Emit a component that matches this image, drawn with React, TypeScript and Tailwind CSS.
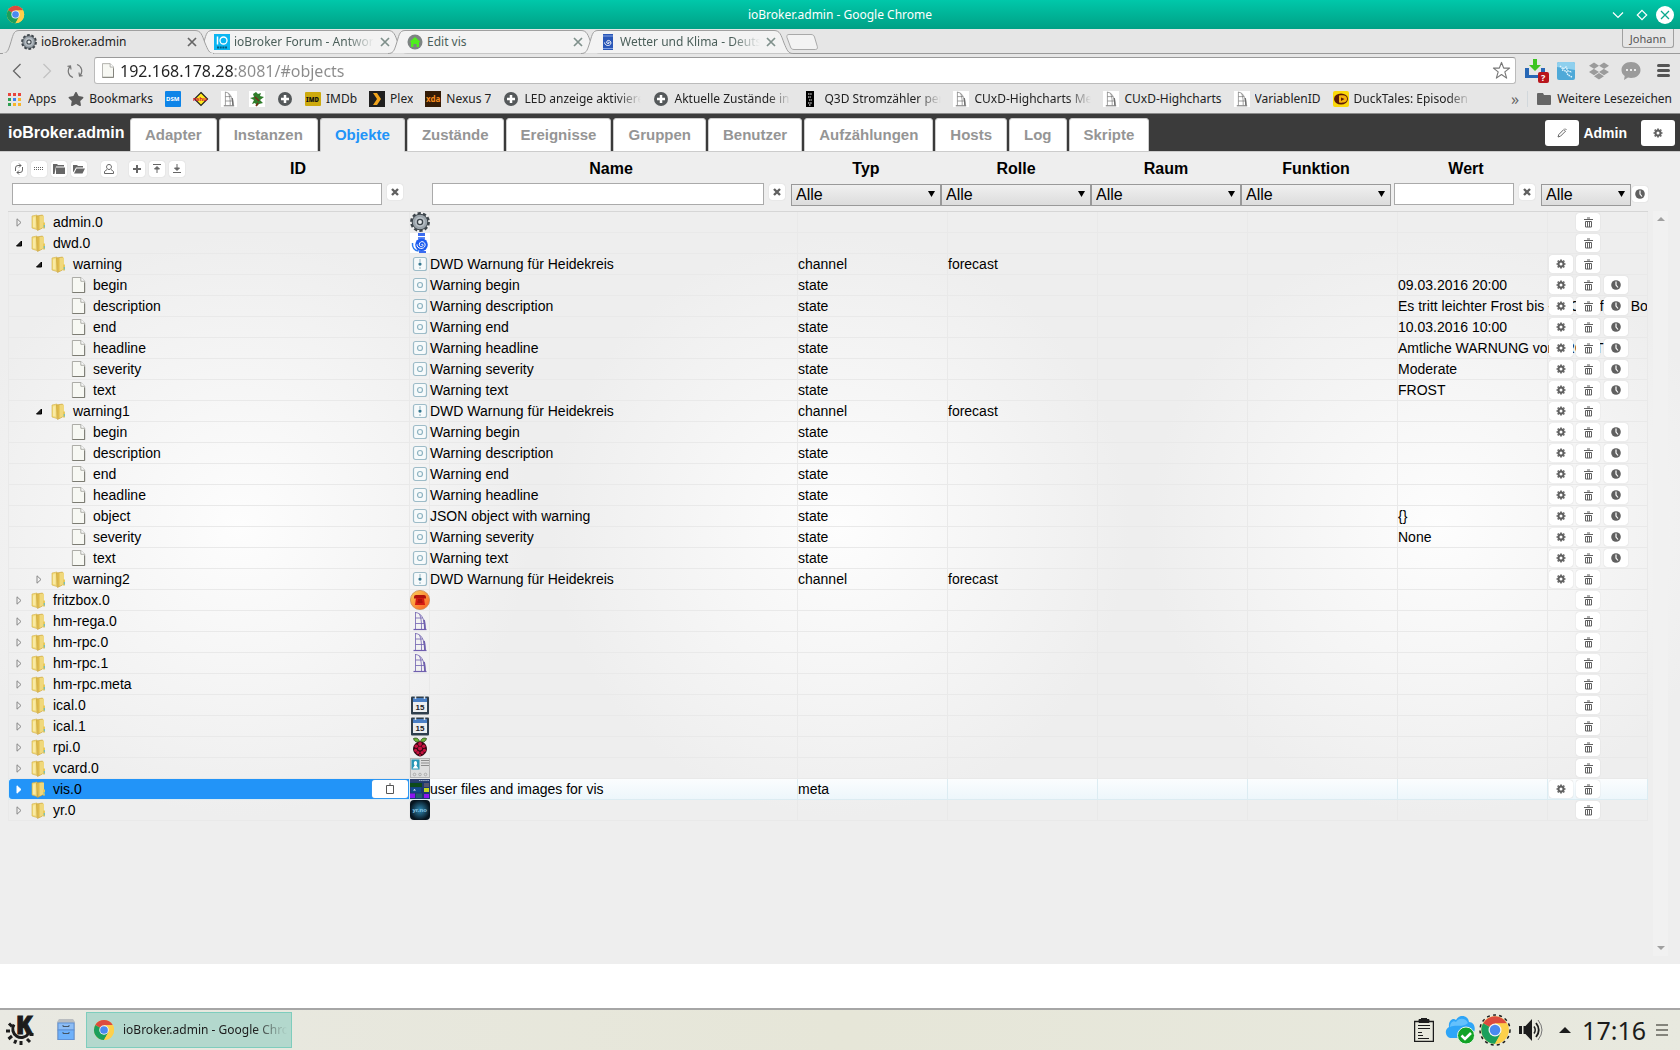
import type { ReactNode } from "react";
import clsx from "clsx";
import { FaDropbox, FaStar } from "react-icons/fa";

/* ---------- shared icons ---------- */

const ChromeIcon = ({ className }: { className?: string }) => (
  <svg viewBox="0 0 24 24" className={className} aria-hidden="true">
    <circle cx="12" cy="12" r="11" fill="#fdd04b" />
    <path d="M12 12 2.5 6.5A11 11 0 0 1 21.5 6.5L12 6.8Z" fill="#dc4b3e" />
    <path d="M2.5 6.5A11 11 0 0 0 12 23l4.6-8.2L12 12Z" fill="#1a9f5c" />
    <path d="M12 6.8h9.6A11 11 0 0 1 12 23l4.6-8.2Z" fill="#fdd04b" />
    <circle cx="12" cy="12" r="5.2" fill="#f4f4f4" />
    <circle cx="12" cy="12" r="4.2" fill="#4a89f0" />
  </svg>
);

const CogLogo = ({ className }: { className?: string }) => (
  <svg viewBox="0 0 20 20" className={className} aria-hidden="true">
    <circle cx="10" cy="10" r="8.4" fill="none" stroke="#3c444a" strokeWidth="3" strokeDasharray="3.2 2.08" />
    <circle cx="10" cy="10" r="7.8" fill="#9ba4ab" stroke="#3c444a" />
    <circle cx="10" cy="10" r="5" fill="#b9c0c6" />
    <circle cx="10" cy="10" r="2.6" fill="#e6eaec" stroke="#3c444a" strokeWidth="1.3" />
  </svg>
);

const DwdIcon = ({ className }: { className?: string }) => (
  <svg viewBox="0 0 20 20" className={className} aria-hidden="true">
    <rect width="20" height="20" fill="#fff" />
    <path d="M8 0h7v3H8zM9 18h7v2H9z" fill="#3b6cf0" />
    <path d="M8 4h7v2.500H8z" fill="#5c86f2" />
    <circle cx="11.500" cy="11.800" r="6.300" fill="#1d5cf0" />
    <path d="M2.500 10c-.5 4.500 2 7.500 6 8" fill="none" stroke="#2c7bf0" strokeWidth="1.500" />
    <path
      d="M11.500 12c0-1.100 1.700-.9 1.500.4s-2.800 1.700-3.500.1.600-3.900 2.400-3.900 3.600 1.600 3.200 3.800-2.400 3.300-4.600 3-3.700-2-3.500-4"
      fill="none"
      stroke="#fff"
    />
  </svg>
);

const PageIcon = ({ className }: { className?: string }) => (
  <svg viewBox="0 0 14 17" className={className} aria-hidden="true">
    <path d="M.5.5h9l4 4v12H.5z" fill="#f7f8f3" stroke="#a5a5a0" />
    <path d="M9.500.5v4h4" fill="#fff" stroke="#a5a5a0" />
    <path d="M.5 16.500h13V6" fill="none" stroke="#77776f" />
  </svg>
);

const FolderIcon = () => (
  <svg viewBox="0 0 15 17" className="h-[17px] w-[15px]" aria-hidden="true">
    <path d="M1 2 6 1v14.500L1 14z" fill="#f3dc7c" stroke="#d1ae45" strokeWidth=".6" />
    <path d="M2 3.500 4.500 3v10.500L2 13z" fill="#f9eaa4" />
    <path d="M5.500 2 11.500 1v13L6.500 16.500z" fill="#e0bb4a" stroke="#c9a23c" strokeWidth=".6" />
    <path d="M8.500 2 13 1.500V13l-4.500 2z" fill="#f0d87c" />
    <path d="M12 8.500h2v6h-2z" fill="#e8c95a" />
    <path d="M12.800 11h1v2.500h-1z" fill="#58bdd6" />
  </svg>
);

const GearGlyph = () => (
  <svg viewBox="0 0 10 10" className="size-[10px]" fill="none" stroke="#606060" aria-hidden="true">
    <circle cx="5" cy="5" r="2.500" strokeWidth="2" />
    <path d="M5 .5v1.500M5 8v1.500M.5 5H2M8 5h1.500M1.700 1.700l1 1M7.300 7.300l1 1M1.700 8.300l1-1M7.300 2.700l1-1" strokeWidth="1.700" />
  </svg>
);

const TrashGlyph = () => (
  <svg viewBox="0 0 9 11" className="h-[11px] w-[9px]" fill="none" stroke="#606060" aria-hidden="true">
    <path d="M0 2.500h9M3 1h3" strokeWidth="1.200" />
    <path d="M1.500 4.500h6v5.500h-6zM3.500 4.500V10M5.500 4.500V10" />
  </svg>
);

const ClockGlyph = () => (
  <svg viewBox="0 0 10 10" className="size-[10px]" aria-hidden="true">
    <circle cx="5" cy="5" r="4.800" fill="#606060" />
    <path d="M5 1.500V5l2 2.500" fill="none" stroke="#fff" strokeWidth="1.200" />
  </svg>
);

const CrossGlyph = () => (
  <svg viewBox="0 0 8 8" className="size-2" aria-hidden="true">
    <path d="m1 1 6 6M7 1 1 7" stroke="#606060" strokeWidth="2.400" />
  </svg>
);

/* ---------- browser chrome ---------- */

const TitleBar = () => (
  <div className="relative flex h-[29px] items-center justify-between bg-linear-to-b from-[#00c8aa] to-[#00a085] px-[6px]">
    <ChromeIcon className="size-[19px]" />
    <span className="absolute inset-x-0 text-center text-xs text-white">ioBroker.admin - Google Chrome</span>
    <div className="relative flex items-center gap-3">
      <button aria-label="Minimieren">
        <svg viewBox="0 0 12 12" className="size-3" fill="none" stroke="#fff" strokeWidth="1.200">
          <path d="m1 3.500 5 5 5-5" />
        </svg>
      </button>
      <button aria-label="Maximieren">
        <svg viewBox="0 0 12 12" className="size-3" fill="none" stroke="#fff" strokeWidth="1.200">
          <path d="m6 1.300 4.700 4.700L6 10.700 1.300 6z" />
        </svg>
      </button>
      <button aria-label="Schließen" className="-ml-1">
        <svg viewBox="0 0 18 18" className="size-[18px]">
          <circle cx="9" cy="9" r="9" fill="#fff" />
          <path d="m5 5 8 8m0-8-8 8" stroke="#0aa88d" strokeWidth="1.300" />
        </svg>
      </button>
    </div>
  </div>
);

type BrowserTab = { title: string; icon: ReactNode; active?: boolean };

const browserTabs: BrowserTab[] = [
  { title: "ioBroker.admin", icon: <CogLogo className="size-4" />, active: true },
  {
    title: "ioBroker Forum - Antwor",
    icon: (
      <svg viewBox="0 0 16 16" className="size-4">
        <rect width="16" height="16" fill="#0bb6f2" />
        <path d="M3.500 2.500v8" stroke="#fff" strokeWidth="1.500" />
        <circle cx="9.500" cy="6.500" r="3.500" fill="none" stroke="#fff" strokeWidth="1.300" />
        <path d="M3 13.500h10" stroke="#075a7a" strokeDasharray="2 .7" strokeWidth="2" />
      </svg>
    ),
  },
  {
    title: "Edit vis",
    icon: (
      <svg viewBox="0 0 16 16" className="size-4">
        <circle cx="8" cy="8" r="7.500" fill="#7d8383" />
        <path d="M2.500 8 8 3l5.500 5H12v5H9.500v-3h-3v3H4V8z" fill="#4fee1c" />
      </svg>
    ),
  },
  {
    title: "Wetter und Klima - Deuts",
    icon: (
      <svg viewBox="0 0 16 16" className="size-4">
        <rect x="3" width="10" height="16" fill="#2a57b8" />
        <path d="M3 2h10M3 14.500h10" stroke="#9db8ec" strokeWidth=".8" />
        <path d="M8.300 8.600c0-.8 1.100-.6 1 .2s-2 1.200-2.500.1S7.300 6.400 8.500 6.400s2.600 1.200 2.400 2.800-2 2.600-3.500 2.300S4.500 10 4.600 8.500" fill="none" stroke="#fff" />
      </svg>
    ),
  },
];

const TabStrip = () => (
  <div className="relative flex h-[25px] items-end justify-between bg-[#e6e6e6] pl-[2px]">
    <div className="absolute inset-x-0 bottom-0 h-px bg-[#9a9a9a]" />
    <div className="flex">
      {browserTabs.map((tab) => (
        <div
          key={tab.title}
          className={clsx("relative -mr-[19px] flex h-6 w-[212px] items-center pr-[17px] pl-[19px]", tab.active && "z-10")}
        >
          <svg viewBox="0 0 212 24" preserveAspectRatio="none" className="absolute inset-0 h-full w-full" aria-hidden="true">
            <path
              d="M0 23.500C5 23.500 6 21 8 15 11 6 11 .5 17 .5H193C199 .5 200 5 203 13 206 20 207 23.500 212 23.500"
              fill={tab.active ? "#e6e6e6" : "#f3f3f3"}
              stroke="#a0a0a0"
            />
            {tab.active && <path d="M1 23.500h210" stroke="#e6e6e6" strokeWidth="1.500" />}
          </svg>
          <span className="relative">{tab.icon}</span>
          <span
            className={clsx(
              "relative ml-1 flex-1 overflow-hidden text-xs whitespace-nowrap",
              tab.active ? "text-[#222]" : "text-[#4b5f5a]",
              tab.title.length > 20 && "mask-[linear-gradient(to_right,black_80%,transparent)]",
            )}
          >
            {tab.title}
          </span>
          <button aria-label={`${tab.title} schließen`} className="relative ml-[6px]">
            <svg viewBox="0 0 10 10" className="size-[10px]">
              <path d="m1 1 8 8m0-8-8 8" stroke={tab.active ? "#666" : "#7f908b"} strokeWidth="1.700" />
            </svg>
          </button>
        </div>
      ))}
      <button aria-label="Neuer Tab" className="relative ml-3 self-center">
        <svg viewBox="0 0 32 16" className="h-4 w-8" fill="#f3f3f3" stroke="#a9a9a9">
          <path d="M3 .5h22c2 0 3 1 3.500 2.500l2.800 9.500c.5 2-.3 3-2 3H8c-2 0-3-1-3.500-2.500L1 3.500C.5 1.500 1 .5 3 .5z" />
        </svg>
      </button>
    </div>
    <button className="mr-[6px] h-[19px] self-start rounded-b-[3px] border border-t-0 border-[#a0a0a0] bg-[#e6e6e6] px-[7px] pt-[2px] text-[11px] leading-4 text-[#555]">
      Johann
    </button>
  </div>
);

const Toolbar = () => (
  <div className="flex h-[33px] items-center bg-[#e6e6e6] pr-[10px] pl-3">
    <button aria-label="Zurück">
      <svg viewBox="0 0 10 16" className="h-4 w-[10px]" fill="none" stroke="#666" strokeWidth="1.300">
        <path d="M8.500 1 1.500 8l7 7" />
      </svg>
    </button>
    <button aria-label="Vorwärts" className="ml-5">
      <svg viewBox="0 0 10 16" className="h-4 w-[10px]" fill="none" stroke="#c2c2c2" strokeWidth="1.300">
        <path d="m1.500 1 7 7-7 7" />
      </svg>
    </button>
    <button aria-label="Neu laden" className="ml-[15px]">
      <svg viewBox="0 0 16 16" className="size-4" fill="none" stroke="#777" strokeWidth="1.200">
        <path d="M6 14.500A6.800 6.800 0 0 1 3 3.500M10 1.500a6.800 6.800 0 0 1 3 11M.5 3.300l3-.3.500 3.500M15.500 12.700l-3 .3-.5-3.500" />
      </svg>
    </button>
    <div className="ml-[11px] flex h-[27px] flex-1 items-center rounded-[3px] border border-[#bbb] border-t-[#9a9a9a] bg-white pr-1 pl-[7px]">
      <PageIcon className="h-[15px] w-3" />
      <input
        aria-label="Adresse"
        defaultValue="192.168.178.28:8081/#objects"
        className="ml-[6px] min-w-0 flex-1 bg-[linear-gradient(to_right,#222_114px,#8b8b8b_114px)] bg-clip-text text-base leading-6 text-transparent outline-none"
      />
      <button aria-label="Lesezeichen">
        <svg viewBox="0 0 20 20" className="size-[19px]" fill="#fff" stroke="#777" strokeWidth="1.200" strokeLinejoin="round">
          <path d="m10 1.500 2.300 6h6.200l-5 4 1.900 6.500L10 14.200 4.600 18l1.900-6.500-5-4h6.200z" />
        </svg>
      </button>
    </div>
    <div className="ml-[9px] flex items-center">
      <svg viewBox="0 0 24 24" className="size-6">
        <path d="M0 9h4v7h12V9h4v10H0z" fill="#2767b5" />
        <path d="M8 0h4v6h4l-6 6-6-6h4z" fill="#3cc421" />
        <rect x="13" y="13" width="11" height="11" rx="2" fill="#b8161c" />
        <text x="16" y="22" fontSize="9" fontWeight="bold" fill="#fff">
          ?
        </text>
      </svg>
      <svg viewBox="0 0 18 18" className="ml-2 size-[18px]">
        <rect width="18" height="18" rx="2" fill="#4fa9d8" />
        <path d="M0 2q0-2 2-2h14q2 0 2 2v6L0 5z" fill="#8fd0ee" />
        <path d="m3 4 3 3 3-2 2 4 4 1M5 8l4 1 2 4 4 2" fill="none" stroke="#e3f5fd" strokeWidth="1.500" strokeDasharray="1.500 .8" />
      </svg>
      <FaDropbox className="ml-[14px] size-5 text-[#9b9b9b]" />
      <svg viewBox="0 0 20 18" className="ml-3 h-[18px] w-5">
        <path d="M10 0c5.500 0 9.500 3.500 9.500 8S15.500 16 10 16c-1 0-2-.1-3-.4L3 18l.7-4C1.700 12.500.5 10.500.5 8c0-4.500 4-8 9.500-8z" fill="#9b9b9b" />
        <path d="M5 7h2v2H5zM9 7h2v2H9zM13 7h2v2h-2z" fill="#e9e9e9" />
      </svg>
      <button aria-label="Menü" className="ml-4 flex flex-col gap-[2px]">
        <span className="h-[3px] w-[13px] rounded-full bg-[#555]" />
        <span className="h-[3px] w-[13px] rounded-full bg-[#555]" />
        <span className="h-[3px] w-[13px] rounded-full bg-[#555]" />
      </button>
    </div>
  </div>
);

const SailIcon = ({ className, color }: { className?: string; color: string }) => (
  <svg viewBox="0 0 16 20" className={className} fill="none" stroke={color} aria-hidden="true">
    <path d="M3.500 1v17M3.500 1.500C9 2 12.500 7 13 18M3.500 7h7M3.500 12.500h9M7.500 3c2 4 2 10 2 15" strokeWidth=".8" />
    <path d="M12 9c.6 2.500.9 5 1 9" strokeWidth="1.800" />
    <path d="M1.500 18.500h13" strokeWidth="1.200" />
  </svg>
);

const ChartMark = () => (
  <span className="block bg-white">
    <SailIcon className="size-4" color="#6c6c6c" />
  </span>
);

const PlusMark = () => (
  <svg viewBox="0 0 16 16" className="size-4">
    <circle cx="8" cy="8" r="7" fill="#54585a" />
    <path d="M8 4v8M4 8h8" stroke="#fff" strokeWidth="2.500" />
  </svg>
);

const bookmarks: { title?: string; label?: string; icon: ReactNode }[] = [
  {
    title: "Apps",
    icon: (
      <svg viewBox="0 0 16 16" className="size-4">
        <path d="M1 2h3v3H1zM6 2h3v3H6zM11 2h3v3h-3z" fill="#e8453c" />
        <path d="M1 7h3v3H1zM1 12h3v3H1z" fill="#2fa052" />
        <path d="M6 7h3v3H6z" fill="#3c80f0" />
        <path d="M11 7h3v3h-3zM6 12h3v3H6zM11 12h3v3h-3z" fill="#f7b52c" />
      </svg>
    ),
  },
  { title: "Bookmarks", icon: <FaStar className="size-4 text-[#5b5b5b]" /> },
  {
    label: "DSM",
    icon: (
      <svg viewBox="0 0 16 16" className="size-4">
        <rect width="16" height="16" rx="1" fill="#0d84e8" />
        <text x="1" y="10" fontSize="6" fontWeight="bold" fill="#fff">
          DSM
        </text>
      </svg>
    ),
  },
  {
    label: "Rahu",
    icon: (
      <svg viewBox="0 0 16 16" className="size-4">
        <path d="m8 1.500 6.500 6.500L8 14.500 1.500 8z" fill="#ffe81c" stroke="#222" strokeWidth="1.200" />
        <text x="0" y="10" fontSize="6" fontWeight="bold" fill="#d0103a">
          rahu
        </text>
      </svg>
    ),
  },
  { label: "Charts", icon: <ChartMark /> },
  {
    label: "Palme",
    icon: (
      <svg viewBox="0 0 16 16" className="size-4">
        <rect width="16" height="16" fill="#fff" />
        <path d="m7 1 2 2 3-1-1 3 4 1-4 3 3 3-4 1-2 2-2-3-3 1 2-4-4-2 4-1-1-3z" fill="#2f7d2a" />
        <path d="M6 6l4 4M9 12l-2 3" stroke="#7a2a18" strokeWidth="1.500" />
      </svg>
    ),
  },
  { label: "Favorit", icon: <PlusMark /> },
  {
    title: "IMDb",
    icon: (
      <svg viewBox="0 0 16 16" className="size-4">
        <rect y="1" width="16" height="14" rx="1" fill="#cdaa0e" />
        <text x="1" y="11" fontSize="6" fontWeight="900" fill="#111">
          IMD
        </text>
      </svg>
    ),
  },
  {
    title: "Plex",
    icon: (
      <svg viewBox="0 0 16 16" className="size-4">
        <rect width="16" height="16" fill="#1f1f1f" />
        <path d="M4 2h4l4 6-4 6H4l4-6z" fill="#f0a41c" />
      </svg>
    ),
  },
  {
    title: "Nexus 7",
    icon: (
      <svg viewBox="0 0 16 16" className="size-4">
        <rect width="16" height="16" fill="#331b05" />
        <text x="1" y="11" fontSize="8" fontWeight="bold" fill="#f58a1c">
          xda
        </text>
      </svg>
    ),
  },
  { title: "LED anzeige aktiviere", icon: <PlusMark /> },
  { title: "Aktuelle Zustände in", icon: <PlusMark /> },
  {
    title: "Q3D Stromzähler per",
    icon: (
      <svg viewBox="0 0 16 16" className="size-4">
        <rect x="3" width="8" height="16" fill="#000" />
        <path d="M5 3h4M5 6h3M6 9h3M5 12h4M6 14h2" stroke="#fff" strokeDasharray="1.500 .7" />
      </svg>
    ),
  },
  { title: "CUxD-Highcharts Me", icon: <ChartMark /> },
  { title: "CUxD-Highcharts", icon: <ChartMark /> },
  { title: "VariablenID", icon: <ChartMark /> },
  {
    title: "DuckTales: Episoden",
    icon: (
      <svg viewBox="0 0 16 16" className="size-4">
        <rect width="16" height="16" rx="2" fill="#fbd90b" />
        <ellipse cx="8" cy="8" rx="7" ry="5.500" fill="#5c1a06" />
        <path d="M6 4.500c6-.8 8 1 8 3.500s-2 4.300-8 3.500z" fill="#f6b50c" />
        <path d="M8 6.500 11.500 8 8 10z" fill="#5c1a06" />
      </svg>
    ),
  },
];

const BookmarkBar = () => (
  <nav className="flex h-[27px] items-center border-b border-[#8a8a8a] bg-[#e6e6e6] pr-2 pb-[2px] pl-[7px] text-xs text-[#222]">
    <div className="flex min-w-0 flex-1 items-center gap-3">
      {bookmarks.map((b, i) => {
        const long = b.title && b.title.length > 17;
        return (
          <a key={i} href="#objects" aria-label={b.title ?? b.label} className="flex shrink-0 items-center gap-[5px]">
            {b.icon}
            {b.title && (
              <span
                className={clsx(
                  "overflow-hidden whitespace-nowrap",
                  long && "w-[117px] mask-[linear-gradient(to_right,black_80%,transparent)]",
                )}
              >
                {b.title}
              </span>
            )}
          </a>
        );
      })}
    </div>
    <button aria-label="Mehr" className="mr-2 text-base leading-5 text-[#666]">
      »
    </button>
    <a href="#objects" className="flex items-center gap-[5px] border-l border-[#d2d8dc] pl-2">
      <svg viewBox="0 0 16 14" className="h-[14px] w-4">
        <path d="M1 2q0-1 1-1h5l1 2h6q1 0 1 1v8q0 1-1 1H2q-1 0-1-1z" fill="#656565" />
      </svg>
      Weitere Lesezeichen
    </a>
  </nav>
);

/* ---------- admin page ---------- */

const menu = [
  "Adapter",
  "Instanzen",
  "Objekte",
  "Zustände",
  "Ereignisse",
  "Gruppen",
  "Benutzer",
  "Aufzählungen",
  "Hosts",
  "Log",
  "Skripte",
];

const AppHeader = () => (
  <header className="flex h-[38px] items-end border-b border-[#ccc] bg-[#3b3b3b] pr-[5px] pl-2 font-bold">
    <h1 className="w-[122px] shrink-0 self-center text-base leading-6 whitespace-nowrap text-white">ioBroker.admin</h1>
    <nav className="flex flex-1 gap-[2px]">
      {menu.map((m) => (
        <a
          key={m}
          href={`#${m}`}
          className={clsx(
            "-mb-px flex h-[34px] items-center rounded-t-[3px] border border-[#ccc] px-[14px] text-[15px]",
            m === "Objekte" ? "border-b-[#eee] bg-[#eee] text-[#2294f8]" : "bg-white text-[#959595]",
          )}
        >
          {m}
        </a>
      ))}
    </nav>
    <div className="flex items-center self-center pt-px">
      <button aria-label="Bearbeiten" className="flex h-[26px] w-[34px] items-center justify-center rounded-[3px] bg-white">
        <svg viewBox="0 0 10 10" className="size-[10px]" fill="none" stroke="#666">
          <path d="m1 9 .8-2.500 5-5L8.500 3.200l-5 5zM8 .5 9.500 2" />
        </svg>
      </button>
      <span className="ml-1 text-sm text-white">Admin</span>
      <button
        aria-label="Einstellungen"
        className="ml-[14px] flex h-[26px] w-[34px] items-center justify-center rounded-[3px] bg-white"
      >
        <GearGlyph />
      </button>
    </div>
  </header>
);

const SmallButton = ({ label, className, children }: { label: string; className?: string; children: ReactNode }) => (
  <button
    aria-label={label}
    className={clsx("flex shrink-0 items-center justify-center rounded-[3px] bg-white shadow-[0_0_1px_#bbb]", className ?? "size-4")}
  >
    {children}
  </button>
);

const Glyph = ({ d, fill }: { d: string; fill?: boolean }) => (
  <svg viewBox="0 0 12 12" className="size-3" fill={fill ? "#666" : "none"} stroke="#666" aria-hidden="true">
    <path d={d} />
  </svg>
);

const Filter = ({ label }: { label: string }) => (
  <div className="relative h-[22px]">
    <select
      aria-label={label}
      className="h-full w-full appearance-none border border-[#999] bg-linear-to-b from-[#f0f0f0] to-[#dcdcdc] pl-1 text-base leading-[18px] text-black"
    >
      <option>Alle</option>
    </select>
    <svg viewBox="0 0 7 6" className="pointer-events-none absolute top-2 right-[6px] h-[6px] w-[7px]" aria-hidden="true">
      <path d="M0 0h7L3.500 6z" fill="#000" />
    </svg>
  </div>
);

const headerCols = "grid grid-cols-[420px_minmax(0,1fr)_repeat(5,150px)_139px] pl-[11px]";

const TreeHeader = () => (
  <div className="pt-2 pb-[6px]">
    <div className={clsx(headerCols, "items-center text-center text-base leading-[18px] font-bold text-black")}>
      <div className="flex items-center">
        <div className="flex gap-1">
          <SmallButton label="Aktualisieren">
            <Glyph d="M2.500 8V5q0-2.500 2.500-2.500h3M6 .5l2 2-2 2M9.500 4v3q0 2.500-2.500 2.500H4M6 7.500l-2 2 2 2" />
          </SmallButton>
          <SmallButton label="Liste">
            <Glyph d="M1 4.500h1M3 4.500h1M5 4.500h1M7 4.500h1M9 4.500h1M1 6.500h1M3 6.500h1M5 6.500h1M7 6.500h1M9 6.500h1" />
          </SmallButton>
          <SmallButton label="Alle zuklappen">
            <svg viewBox="0 0 12 12" className="size-3" fill="#666">
              <path d="M0 1h4l1 1h6v1.500H3L1.500 11H0zM3 4.500h9V11H3z" />
            </svg>
          </SmallButton>
          <SmallButton label="Alle aufklappen">
            <svg viewBox="0 0 12 12" className="size-3" fill="#666">
              <path d="M0 2h4l1 1h5v1.500H3L.8 8.500 0 9zM3.500 5.500H12L9.500 10.500H1z" />
            </svg>
          </SmallButton>
        </div>
        <SmallButton label="Benutzer" className="ml-[14px] size-4">
          <Glyph d="M6 1.500c3.500 0 3 5 0 5s-3.500-5 0-5zM4 6.500l-2.500 2v2h9v-2l-2.500-2" />
        </SmallButton>
        <div className="ml-3 flex gap-1">
          <SmallButton label="Hinzufügen">
            <svg viewBox="0 0 8 8" className="size-2">
              <path d="M4 0v8M0 4h8" stroke="#666" strokeWidth="2" />
            </svg>
          </SmallButton>
          <SmallButton label="Hochladen">
            <Glyph fill d="M2 1.500h8M6 10V5M3.500 6 6 3.500 8.500 6z" />
          </SmallButton>
          <SmallButton label="Herunterladen">
            <Glyph fill d="M2 9.500h8M6 1v5M3.500 5 6 7.500 8.500 5z" />
          </SmallButton>
        </div>
        <span className="flex-1 pr-5">ID</span>
      </div>
      <span>Name</span>
      <span>Typ</span>
      <span>Rolle</span>
      <span>Raum</span>
      <span>Funktion</span>
      <span>Wert</span>
    </div>
    <div className={clsx(headerCols, "mt-[5px]")}>
      <div className="flex gap-[5px] pl-px">
        <input aria-label="ID filtern" className="h-[22px] w-[370px] border border-[#aaa] bg-white px-1" />
        <SmallButton label="ID leeren" className="mt-px size-4">
          <CrossGlyph />
        </SmallButton>
      </div>
      <div className="flex gap-[5px] pr-[6px] pl-px">
        <input aria-label="Name filtern" className="h-[22px] min-w-0 flex-1 border border-[#aaa] bg-white px-1" />
        <SmallButton label="Name leeren" className="mt-px size-4">
          <CrossGlyph />
        </SmallButton>
      </div>
      <Filter label="Typ" />
      <Filter label="Rolle" />
      <Filter label="Raum" />
      <Filter label="Funktion" />
      <div className="flex gap-[5px] pr-[6px] pl-[3px]">
        <input aria-label="Wert filtern" className="h-[22px] min-w-0 flex-1 border border-[#aaa] bg-white px-1" />
        <SmallButton label="Wert leeren" className="mt-px size-4">
          <CrossGlyph />
        </SmallButton>
      </div>
      <div className="flex items-center gap-px">
        <div className="w-[90px]">
          <Filter label="Historie" />
        </div>
        <SmallButton label="Historie anzeigen">
          <ClockGlyph />
        </SmallButton>
      </div>
    </div>
  </div>
);

const icons: Record<string, ReactNode> = {
  cog: <CogLogo className="size-5" />,
  dwd: <DwdIcon className="size-5" />,
  channel: (
    <svg viewBox="0 0 20 20" className="size-5">
      <rect x="3.500" y="3.500" width="13" height="13" rx="2" fill="#f6fafb" stroke="#9ebcc8" strokeWidth="1.200" />
      <path d="M10 5v10" stroke="#8fb0bd" strokeDasharray="3 1" />
      <circle cx="10" cy="10" r="1.600" fill="#35778f" />
    </svg>
  ),
  state: (
    <svg viewBox="0 0 20 20" className="size-5" fill="none">
      <rect x="3.500" y="3.500" width="13" height="13" rx="2" fill="#f6fafb" stroke="#9ebcc8" strokeWidth="1.200" />
      <circle cx="10" cy="10" r="2.500" stroke="#8fb4c2" strokeWidth="1.200" />
    </svg>
  ),
  phone: (
    <svg viewBox="0 0 20 20" className="size-5">
      <defs>
        <linearGradient id="phone" x1="0" y1="0" x2="1" y2="1">
          <stop offset="0" stopColor="#fdd35a" />
          <stop offset="1" stopColor="#fb5a20" />
        </linearGradient>
      </defs>
      <circle cx="10" cy="10" r="9.600" fill="url(#phone)" stroke="#c98a50" strokeWidth=".8" />
      <path d="M4 7q0-2 2-2h8q2 0 2 2v1.500H4z" fill="#b0120d" />
      <path d="M6 8h8l1 7H5z" fill="#d31a12" />
      <path d="M8 10h4M7.500 12h5" stroke="#8a0b08" />
    </svg>
  ),
  sail: <SailIcon className="mx-auto h-5 w-4" color="#6f5fae" />,
  calendar: (
    <svg viewBox="0 0 20 20" className="size-5">
      <rect x="1" y="1.500" width="18" height="18" rx="1" fill="#2f3f4d" />
      <rect x="3" y="3" width="14" height="4" fill="#4a7fc4" />
      <rect x="3" y="7" width="14" height="10" fill="#eceff1" />
      <path d="M5.500 0v4M14.500 0v4" stroke="#dfe4e8" strokeWidth="1.500" />
      <text x="5.500" y="15" fontSize="8" fontWeight="bold" fill="#222">
        15
      </text>
    </svg>
  ),
  berry: (
    <svg viewBox="0 0 20 20" className="size-5">
      <path d="M9.500 5C5 5.500 4 3.500 3.500 1.500 6 .5 9 1 9.500 5zM10.500 5c4.500.5 5.500-1.500 6-3.500-2.500-1-5.500-.5-6 3.500z" fill="#6cb53a" stroke="#243a12" strokeWidth=".7" />
      <path d="M10 4.500c4 0 7 3.500 7 7.500 0 3.500-4 7.500-7 7.500S3 15.500 3 12s3-7.500 7-7.500z" fill="#3a0713" />
      <g fill="#c8113f">
        <circle cx="10" cy="7" r="1.900" />
        <circle cx="6.300" cy="9.300" r="1.800" />
        <circle cx="13.700" cy="9.300" r="1.800" />
        <circle cx="10" cy="11.500" r="2.100" />
        <circle cx="5.600" cy="13.300" r="1.600" />
        <circle cx="14.400" cy="13.300" r="1.600" />
        <circle cx="7.900" cy="15.600" r="1.600" />
        <circle cx="12.100" cy="15.600" r="1.600" />
        <circle cx="10" cy="18" r="1" />
      </g>
    </svg>
  ),
  card: (
    <svg viewBox="0 0 20 20" className="size-5">
      <rect x=".5" y=".5" width="19" height="19" fill="#dedede" stroke="#b5b5b5" />
      <rect x="1.500" y="1.500" width="8" height="10" fill="#2795b5" />
      <path d="M5.500 3c2 0 2 3.500.8 4.500L8.500 10.500h-6L4.700 7.500C3.500 6.500 3.500 3 5.500 3z" fill="#fff" />
      <path d="M11 2.500h8M11 5h8M11 7.500h8" stroke="#8d8d8d" />
      <g fill="none" stroke="#adadad">
        <circle cx="4.500" cy="16.500" r="1.300" />
        <circle cx="10" cy="16.500" r="1.300" />
        <circle cx="15.500" cy="16.500" r="1.300" />
      </g>
    </svg>
  ),
  vis: (
    <svg viewBox="0 0 20 20" className="size-5">
      <rect width="20" height="20" fill="#1c3a6e" />
      <path d="M0 0h20v3H0z" fill="#2a3f6e" />
      <path d="M9 1.500h10" stroke="#9fb4cc" strokeDasharray="1.500 .6" />
      <path d="M0 4h12v4H0z" fill="#0d4a1a" />
      <path d="M1 8.500h10v5H1z" fill="#124a8c" />
      <path d="M14 9h5v4h-5z" fill="#c3d81e" />
      <path d="M0 14.500h5V19H0zM14 15h5v4h-5z" fill="#8a16f0" />
      <path d="M6 14.500h6V19H6z" fill="#22606e" />
      <path d="M14 4h5v4h-5z" fill="#56566e" />
      <path d="M3 11.500 4.500 10l1.500 1.500z" fill="#fff" />
    </svg>
  ),
  yr: (
    <svg viewBox="0 0 20 20" className="size-5">
      <defs>
        <radialGradient id="yr">
          <stop offset="0" stopColor="#2f8ab5" />
          <stop offset="1" stopColor="#07151f" />
        </radialGradient>
      </defs>
      <rect width="20" height="20" rx="4" fill="url(#yr)" />
      <text x="2.500" y="12" fontSize="6" fontWeight="bold" fill="#8cc7e6">
        yr.no
      </text>
    </svg>
  ),
};

type Row = {
  id: string;
  level?: 0 | 1 | 2;
  open?: boolean;
  icon?: string;
  name?: string;
  type?: string;
  role?: string;
  value?: string;
  selected?: boolean;
};

const state = (id: string, name: string, value?: string): Row => ({ id, level: 2, icon: "state", name, type: "state", value });
const channel = (id: string, open: boolean): Row => ({
  id,
  level: 1,
  open,
  icon: "channel",
  name: "DWD Warnung für Heidekreis",
  type: "channel",
  role: "forecast",
});

const rows: Row[] = [
  { id: "admin.0", icon: "cog" },
  { id: "dwd.0", icon: "dwd", open: true },
  channel("warning", true),
  state("begin", "Warning begin", "09.03.2016 20:00"),
  state("description", "Warning description", "Es tritt leichter Frost bis -2 °C auf. Im Bodennähe"),
  state("end", "Warning end", "10.03.2016 10:00"),
  state("headline", "Warning headline", "Amtliche WARNUNG vor FROST"),
  state("severity", "Warning severity", "Moderate"),
  state("text", "Warning text", "FROST"),
  channel("warning1", true),
  state("begin", "Warning begin"),
  state("description", "Warning description"),
  state("end", "Warning end"),
  state("headline", "Warning headline"),
  state("object", "JSON object with warning", "{}"),
  state("severity", "Warning severity", "None"),
  state("text", "Warning text"),
  channel("warning2", false),
  { id: "fritzbox.0", icon: "phone" },
  { id: "hm-rega.0", icon: "sail" },
  { id: "hm-rpc.0", icon: "sail" },
  { id: "hm-rpc.1", icon: "sail" },
  { id: "hm-rpc.meta" },
  { id: "ical.0", icon: "calendar" },
  { id: "ical.1", icon: "calendar" },
  { id: "rpi.0", icon: "berry" },
  { id: "vcard.0", icon: "card" },
  { id: "vis.0", icon: "vis", name: "user files and images for vis", type: "meta", selected: true },
  { id: "yr.0", icon: "yr" },
];

const indent = ["pl-0", "pl-5", "pl-10"];

const Expander = ({ row }: { row: Row }) => {
  if (row.level === 2) return null;
  return (
    <svg viewBox="0 0 8 9" className="h-[9px] w-2" aria-hidden="true">
      {row.open ? (
        <path d="M6.500 2v5h-5z" fill="#222" stroke="#000" />
      ) : (
        <path d="M2 .8 6 4.500 2 8.200z" fill={row.selected ? "#fff" : "none"} stroke={row.selected ? "#fff" : "#888"} />
      )}
    </svg>
  );
};

const TreeRow = ({ row }: { row: Row }) => {
  const cell = clsx("border-b border-l p-0 whitespace-nowrap", row.selected ? "border-[#dcecf2]" : "border-[#e9e9e9]");
  return (
    <tr className={clsx("h-[21px]", row.selected && "bg-linear-to-b from-[#fbfdfe] to-[#ecf6fb]")}>
      <td className={cell}>
        <div className={clsx("flex h-5 items-center", indent[row.level ?? 0], row.selected && "rounded-l-[3px] bg-[#2294f8]")}>
          <span className="w-[22px] pl-[6px]">
            <Expander row={row} />
          </span>
          {row.level === 2 ? <PageIcon className="h-4 w-[15px]" /> : <FolderIcon />}
          <span className="ml-[7px] flex-1">{row.id}</span>
          {row.selected && (
            <SmallButton label="Kopieren" className="mr-px h-[18px] w-9">
              <svg viewBox="0 0 10 12" className="h-3 w-[10px]" fill="none" stroke="#555">
                <path d="M1.500 2.500h7v8h-7zM3 2.500h4M4 1h2" />
              </svg>
            </SmallButton>
          )}
        </div>
      </td>
      <td className={cell}>{row.icon && icons[row.icon]}</td>
      <td className={cell}>{row.name}</td>
      <td className={cell}>{row.type}</td>
      <td className={cell}>{row.role}</td>
      <td className={cell} />
      <td className={cell} />
      <td className={cell}>{row.value}</td>
      <td className={clsx(cell, "relative border-r")}>
        <div className="flex h-5 items-center gap-[3px] pl-px">
          {row.name ? (
            <SmallButton label="Bearbeiten" className="h-[18px] w-6">
              <GearGlyph />
            </SmallButton>
          ) : (
            <span className="w-6" />
          )}
          <SmallButton label="Löschen" className="h-[18px] w-6">
            <TrashGlyph />
          </SmallButton>
          {row.type === "state" && (
            <SmallButton label="Historie" className="ml-px h-[18px] w-6">
              <ClockGlyph />
            </SmallButton>
          )}
        </div>
      </td>
    </tr>
  );
};

const ObjectTree = () => (
  <div className="flex flex-1 pr-3 pb-2 pl-2">
    <div className="min-w-0 flex-1 overflow-hidden">
      <table className="w-full table-fixed border-separate border-spacing-0 border-t border-[#d6d6d6] text-sm leading-5 text-black">
        <colgroup>
          <col className="w-[401px]" />
          <col className="w-[20px]" />
          <col />
          <col className="w-[150px]" />
          <col className="w-[150px]" />
          <col className="w-[150px]" />
          <col className="w-[150px]" />
          <col className="w-[150px]" />
          <col className="w-[101px]" />
        </colgroup>
        <tbody>
          {rows.map((row, i) => (
            <TreeRow key={i} row={row} />
          ))}
        </tbody>
      </table>
    </div>
    <div className="ml-[5px] flex w-[15px] flex-col items-center justify-between bg-[#f1f1f1] py-[6px]">
      <svg viewBox="0 0 8 4" className="h-1 w-2" fill="#a0a0a0">
        <path d="m4 0 4 4H0z" />
      </svg>
      <svg viewBox="0 0 8 4" className="h-1 w-2" fill="#a0a0a0">
        <path d="M0 0h8L4 4z" />
      </svg>
    </div>
  </div>
);

/* ---------- desktop panel ---------- */

const Taskbar = () => (
  <footer className="flex h-[42px] shrink-0 items-center border-t-2 border-[#a6a6a6] bg-linear-to-r from-[#e9e9e2] via-[#e6e6d8] to-[#e8e9df] pr-3 pl-[6px] text-[#1c1c1c]">
    <button aria-label="Startmenü">
      <svg viewBox="0 0 28 30" className="h-[30px] w-7">
        <path d="M8 9.500a8.500 8.500 0 1 0 14.500 9" fill="none" stroke="#1c1c1c" strokeWidth="3" />
        <path d="m3 8.500 3 3M0 16h4M2.500 24l3.500-3M8.500 28.500 10 25M15 26v4M21 24l3 3M23.500 19.500h4" stroke="#1c1c1c" strokeWidth="3" />
        <text x="10" y="19" fontSize="24" fontWeight="900" fill="#1c1c1c" stroke="#1c1c1c">
          K
        </text>
      </svg>
    </button>
    <button aria-label="Dateien" className="ml-[23px]">
      <svg viewBox="0 0 18 22" className="h-[22px] w-[18px]">
        <path d="M2 0h14l2 3v18H0V3z" fill="#b9bdc0" />
        <rect x="1" y="4" width="16" height="7" fill="#8dbdf5" stroke="#5f92d6" />
        <rect x="1" y="11" width="16" height="9.500" fill="#6eb1fa" stroke="#5f92d6" />
        <path d="M6 6v1.500h6V6M6 13v1.500h6V13" fill="none" stroke="#456" />
      </svg>
    </button>
    <button className="ml-[11px] flex h-9 w-[206px] items-center border border-[#7ecdbd] bg-[#b3d8cd] pr-1 pl-[6px] text-left text-xs">
      <ChromeIcon className="size-[22px] shrink-0" />
      <span className="ml-2 overflow-hidden whitespace-nowrap mask-[linear-gradient(to_right,black_80%,transparent)]">
        ioBroker.admin - Google Chrome
      </span>
    </button>
    <div className="ml-auto flex items-center">
      <svg viewBox="0 0 20 24" className="h-6 w-5" fill="none" stroke="#1c1c1c">
        <path d="M.5 3.500h19v20H.5z" strokeWidth="1.500" />
        <path d="M5 1.500h10v3H5zM7.500 0h5v2h-5z" fill="#1c1c1c" />
        <path d="M4 7.500h12M4 10.500h12M4 14.500h4M4 17.500h5M4 20.500h11" />
      </svg>
      <svg viewBox="0 0 31 30" className="ml-[10px] h-[30px] w-[31px]">
        <path d="M6 23a6 6 0 0 1-1-11C4 6 9 2 12 5c3-6 12-5 13 2 5 0 7 6 5 10s-3 6-7 6z" fill="#2ea5f7" />
        <path d="M6 12c0-5 4-7 6-5 3-5 10-4 12 1-5 5-12 1-18 4z" fill="#64c1fc" />
        <circle cx="22" cy="20.500" r="8.500" fill="#12a326" stroke="#e8f4e8" />
        <path d="m17.500 20.500 3.500 3.500 6-6" fill="none" stroke="#fff" strokeWidth="2.500" />
      </svg>
      <svg viewBox="0 0 32 32" className="ml-1 size-8">
        <circle cx="16" cy="16" r="15" fill="none" stroke="#1c1c1c" strokeWidth="1.500" strokeDasharray="3 3.200" />
        <svg x="1" y="1" width="30" height="30">
          <ChromeIcon />
        </svg>
      </svg>
      <svg viewBox="0 0 24 24" className="ml-2 size-6" fill="none" stroke="#1c1c1c">
        <path d="M0 8h3v8H0zM4.500 8h2L13 1v22l-6.500-7h-2z" fill="#1c1c1c" stroke="none" />
        <path d="M15 8.500q2.500 3.500 0 7" strokeWidth="1.500" />
        <path d="M17 5q5.500 7 0 14" strokeWidth="1.800" />
        <path d="M19 2q8 10 0 20" stroke="#777" />
      </svg>
      <svg viewBox="0 0 12 6" className="ml-4 h-[6px] w-3">
        <path d="m6 0 6 6H0z" fill="#1c1c1c" />
      </svg>
      <time className="ml-[11px] text-[25px] leading-9">17:16</time>
      <button aria-label="Leiste anpassen" className="ml-[10px] flex flex-col gap-[3px]">
        <span className="h-[2px] w-3 bg-[#84847c]" />
        <span className="h-[2px] w-3 bg-[#84847c]" />
        <span className="h-[2px] w-3 bg-[#84847c]" />
      </button>
    </div>
  </footer>
);

export default function App() {
  return (
    <div className="flex min-h-screen flex-col bg-white font-['Noto_Sans',sans-serif]">
      <TitleBar />
      <TabStrip />
      <Toolbar />
      <BookmarkBar />
      <div className="flex flex-1 flex-col font-['Liberation_Sans',Arial,sans-serif]">
        <AppHeader />
        <main className="flex flex-1 flex-col bg-[#eee] bg-[radial-gradient(circle_at_center,#fdfdfd_0,#eeeeee_290px)] bg-size-[600px_600px] bg-position-[50%_35%] bg-repeat-x">
          <TreeHeader />
          <ObjectTree />
        </main>
      </div>
      <div className="h-11 shrink-0" />
      <Taskbar />
    </div>
  );
}
